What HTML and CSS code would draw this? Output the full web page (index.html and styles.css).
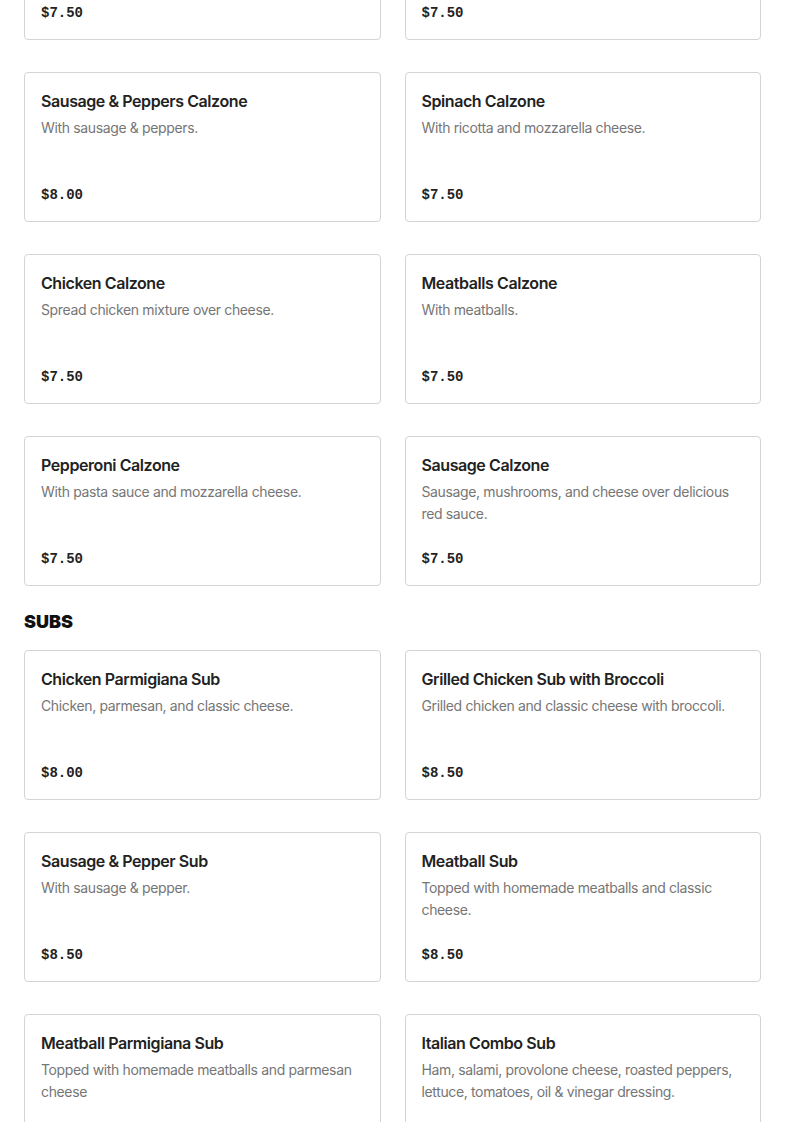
FILE: index.html
```html
<!DOCTYPE html>
<html>
<head>
<meta charset="utf-8">
<link rel="stylesheet" href="styles.css">
</head>
<body>
<main class="menu">
  <section class="section section-first">
    <div class="grid">
      <div class="card"><div class="price">$7.50</div></div>
      <div class="card"><div class="price">$7.50</div></div>
      <div class="card"><div class="info"><h3 class="name">Sausage &amp; Peppers Calzone</h3><p class="desc">With sausage &amp; peppers.</p></div><div class="price">$8.00</div></div>
      <div class="card"><div class="info"><h3 class="name">Spinach Calzone</h3><p class="desc">With ricotta and mozzarella cheese.</p></div><div class="price">$7.50</div></div>
      <div class="card"><div class="info"><h3 class="name">Chicken Calzone</h3><p class="desc">Spread chicken mixture over cheese.</p></div><div class="price">$7.50</div></div>
      <div class="card"><div class="info"><h3 class="name">Meatballs Calzone</h3><p class="desc">With meatballs.</p></div><div class="price">$7.50</div></div>
      <div class="card"><div class="info"><h3 class="name">Pepperoni Calzone</h3><p class="desc">With pasta sauce and mozzarella cheese.</p></div><div class="price">$7.50</div></div>
      <div class="card"><div class="info"><h3 class="name">Sausage Calzone</h3><p class="desc">Sausage, mushrooms, and cheese over delicious red sauce.</p></div><div class="price">$7.50</div></div>
    </div>
  </section>
  <section class="section">
    <h2 class="heading">SUBS</h2>
    <div class="grid">
      <div class="card"><div class="info"><h3 class="name">Chicken Parmigiana Sub</h3><p class="desc">Chicken, parmesan, and classic cheese.</p></div><div class="price">$8.00</div></div>
      <div class="card"><div class="info"><h3 class="name">Grilled Chicken Sub with Broccoli</h3><p class="desc">Grilled chicken and classic cheese with broccoli.</p></div><div class="price">$8.50</div></div>
      <div class="card"><div class="info"><h3 class="name">Sausage &amp; Pepper Sub</h3><p class="desc">With sausage &amp; pepper.</p></div><div class="price">$8.50</div></div>
      <div class="card"><div class="info"><h3 class="name">Meatball Sub</h3><p class="desc">Topped with homemade meatballs and classic cheese.</p></div><div class="price">$8.50</div></div>
      <div class="card"><div class="info"><h3 class="name">Meatball Parmigiana Sub</h3><p class="desc">Topped with homemade meatballs and parmesan cheese</p></div><div class="price">$8.50</div></div>
      <div class="card"><div class="info"><h3 class="name">Italian Combo Sub</h3><p class="desc">Ham, salami, provolone cheese, roasted peppers, lettuce, tomatoes, oil &amp; vinegar dressing.</p></div><div class="price">$8.50</div></div>
    </div>
  </section>
</main>
</body>
</html>
```

FILE: styles.css
```css
* { box-sizing: border-box; }
html, body { margin: 0; padding: 0; background: #fff; }
body {
  font-family: Inter, "Noto Sans", "Liberation Sans", sans-serif;
  color: #222;
}
.menu {
  padding: 0 24px 40px;
  margin-top: -110px;
}
.heading {
  margin: 24px 0 16px;
  font-family: Inter, "Liberation Sans", sans-serif;
  font-weight: 900;
  font-size: 18px;
  line-height: 24px;
  letter-spacing: 0;
  color: #111;
}
.grid {
  display: grid;
  grid-template-columns: 1fr 1fr;
  column-gap: 24px;
  row-gap: 32px;
}
.card {
  border: 1px solid #d4d4d4;
  border-radius: 4px;
  padding: 16px;
  height: 150px;
  display: flex;
  flex-direction: column;
}
.name {
  margin: 0;
  font-size: 16px;
  line-height: 24px;
  font-weight: 600;
  color: #222;
  letter-spacing: -0.42px;
}
.desc {
  margin: 4px 0 0;
  font-size: 14px;
  line-height: 22px;
  color: #767676;
  letter-spacing: -0.36px;
}
.price {
  margin-top: auto;
  font-family: "Liberation Mono", "DejaVu Sans Mono", monospace;
  font-weight: 700;
  font-size: 14px;
  line-height: 22px;
  color: #222;
  transform: translateY(1px);
}
```
